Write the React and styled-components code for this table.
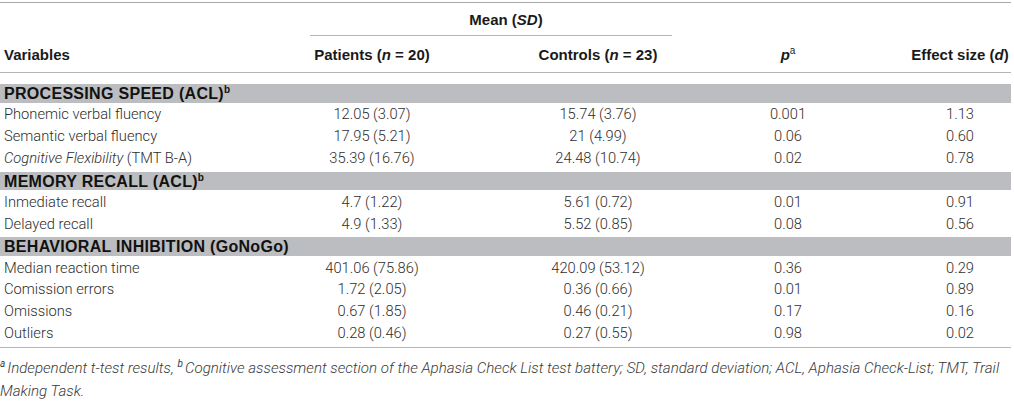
import React from "react";
import styled, { createGlobalStyle } from "styled-components";

const Global = createGlobalStyle`
  html, body { margin: 0; padding: 0; background: #fff; }
  body { font-family: "Liberation Sans", Arial, sans-serif; }
`;

const COLS = "215px 314px 138px 242px 102px";

const Wrap = styled.div`
  width: 1014px;
  padding-top: 2px;
`;

const Table = styled.div`
  width: 1011px;
  border-top: 1px solid #a9a9a9;
`;

const MeanRow = styled.div`
  display: grid;
  grid-template-columns: 310px 362px 1fr;
  height: 33px;
`;

const MeanCell = styled.div`
  grid-column: 2;
  border-bottom: 1px solid #b5b5b5;
  display: flex;
  align-items: center;
  justify-content: center;
  padding-left: 30px;
  font: bold 15px/17px "Liberation Sans", Arial, sans-serif;
  color: #1a1a1a;
`;

const HeadRow = styled.div`
  display: grid;
  grid-template-columns: ${COLS};
  height: 36px;
  align-items: center;
  border-bottom: 1px solid #b5b5b5;
  margin-bottom: 9px;
`;

const HeadCell = styled.div`
  font: bold 15px/17px "Liberation Sans", Arial, sans-serif;
  color: #1a1a1a;
  text-align: ${(p) => p.$align || "center"};
  padding-left: ${(p) => (p.$align === "left" ? "4px" : "0")};
  white-space: nowrap;
`;

const Row = styled.div`
  display: grid;
  grid-template-columns: ${COLS};
  height: 21.9px;
  align-items: center;
`;

const Band = styled.div`
  height: 21.9px;
  padding: 2px 0 1px;
  box-sizing: border-box;
`;

const BandInner = styled.div`
  height: 100%;
  background: #bcbdc0;
  padding-left: 4px;
  font: bold 16px/19px "Liberation Sans", Arial, sans-serif;
  letter-spacing: 0.3px;
  color: #111;
  white-space: nowrap;
`;

const Cell = styled.div`
  font: 300 14.7px/17px Roboto, "Liberation Sans", Arial, sans-serif;
  color: #2e2e2e;
  text-align: ${(p) => (p.$left ? "left" : "center")};
  padding-left: ${(p) => (p.$left ? "4px" : "0")};
  white-space: nowrap;
`;

const Sup = styled.sup`
  font-size: 10px;
  line-height: 0;
  vertical-align: 6px;
  letter-spacing: 0;
  margin-right: ${(p) => (p.$gap ? "2px" : "0")};
  font-weight: ${(p) => (p.$light ? "normal" : "bold")};
`;

const Bottom = styled.div`
  border-top: 1px solid #b5b5b5;
  margin-top: 2px;
  padding-top: 9px;
`;

const Note = styled.p`
  margin: 0;
  font: italic 300 15.1px/23px Roboto, "Liberation Sans", Arial, sans-serif;
  color: #3a3a3a;
  width: 1012px;
`;

const sections = [
  {
    title: <>PROCESSING SPEED (ACL)<Sup>b</Sup></>,
    rows: [
      ["Phonemic verbal fluency", "12.05 (3.07)", "15.74 (3.76)", "0.001", "1.13"],
      ["Semantic verbal fluency", "17.95 (5.21)", "21 (4.99)", "0.06", "0.60"],
      [<><i>Cognitive Flexibility</i> (TMT B-A)</>, "35.39 (16.76)", "24.48 (10.74)", "0.02", "0.78"],
    ],
  },
  {
    title: <>MEMORY RECALL (ACL)<Sup>b</Sup></>,
    rows: [
      ["Inmediate recall", "4.7 (1.22)", "5.61 (0.72)", "0.01", "0.91"],
      ["Delayed recall", "4.9 (1.33)", "5.52 (0.85)", "0.08", "0.56"],
    ],
  },
  {
    title: <>BEHAVIORAL INHIBITION (GoNoGo)</>,
    rows: [
      ["Median reaction time", "401.06 (75.86)", "420.09 (53.12)", "0.36", "0.29"],
      ["Comission errors", "1.72 (2.05)", "0.36 (0.66)", "0.01", "0.89"],
      ["Omissions", "0.67 (1.85)", "0.46 (0.21)", "0.17", "0.16"],
      ["Outliers", "0.28 (0.46)", "0.27 (0.55)", "0.98", "0.02"],
    ],
  },
];

export default function App() {
  return (
    <Wrap>
      <Global />
      <Table>
        <MeanRow>
          <MeanCell>
            <span>
              Mean (<i>SD</i>)
            </span>
          </MeanCell>
        </MeanRow>
        <HeadRow>
          <HeadCell $align="left">Variables</HeadCell>
          <HeadCell>
            Patients (<i>n</i> = 20)
          </HeadCell>
          <HeadCell>
            Controls (<i>n</i> = 23)
          </HeadCell>
          <HeadCell>
            <i>p</i>
            <Sup $light>a</Sup>
          </HeadCell>
          <HeadCell>
            Effect size (<i>d</i>)
          </HeadCell>
        </HeadRow>
        {sections.map((s, i) => (
          <React.Fragment key={i}>
            <Band>
              <BandInner>{s.title}</BandInner>
            </Band>
            {s.rows.map((r, j) => (
              <Row key={j}>
                <Cell $left>{r[0]}</Cell>
                <Cell>{r[1]}</Cell>
                <Cell>{r[2]}</Cell>
                <Cell>{r[3]}</Cell>
                <Cell>{r[4]}</Cell>
              </Row>
            ))}
          </React.Fragment>
        ))}
        <Bottom>
          <Note>
            <Sup $light $gap>a</Sup>Independent t-test results, <Sup $light $gap>b</Sup>Cognitive assessment section of the
            Aphasia Check List test battery; SD, standard deviation; ACL, Aphasia Check-List; TMT, Trail Making Task.
          </Note>
        </Bottom>
      </Table>
    </Wrap>
  );
}
